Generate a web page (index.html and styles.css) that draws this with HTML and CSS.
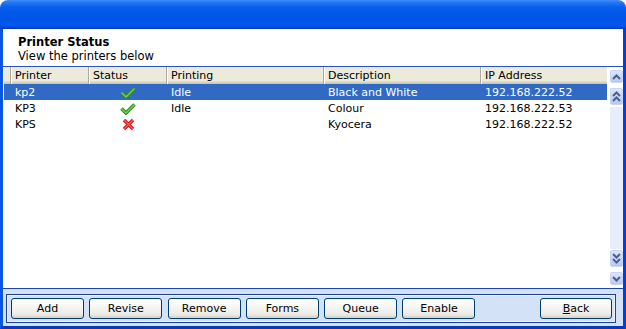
FILE: index.html
```html
<!DOCTYPE html>
<html>
<head>
<meta charset="utf-8">
<link rel="stylesheet" href="styles.css">
</head>
<body>
<div class="window">
  <div class="titlebar"></div>
  <div class="frame">
    <div class="heading">
      <div class="title">Printer Status</div>
      <div class="subtitle">View the printers below</div>
    </div>
    <div class="list">
      <div class="table">
        <div class="row header">
          <div class="cell"></div>
          <div class="cell">Printer</div>
          <div class="cell">Status</div>
          <div class="cell">Printing</div>
          <div class="cell">Description</div>
          <div class="cell">IP Address</div>
        </div>
        <div class="row selected">
          <div class="cell"></div>
          <div class="cell">kp2</div>
          <div class="cell icon">
            <svg width="16" height="12" viewBox="0 0 16 12"><polyline points="1.5,5.5 6,10 14.5,1.5" fill="none" stroke="#2f8a22" stroke-width="3.6"/><polyline points="1.5,5.5 6,10 14.5,1.5" fill="none" stroke="#7ccf5c" stroke-width="1.4"/></svg>
          </div>
          <div class="cell">Idle</div>
          <div class="cell">Black and White</div>
          <div class="cell">192.168.222.52</div>
        </div>
        <div class="row">
          <div class="cell"></div>
          <div class="cell">KP3</div>
          <div class="cell icon">
            <svg width="16" height="12" viewBox="0 0 16 12"><polyline points="1.5,5.5 6,10 14.5,1.5" fill="none" stroke="#2f8a22" stroke-width="3.6"/><polyline points="1.5,5.5 6,10 14.5,1.5" fill="none" stroke="#7ccf5c" stroke-width="1.4"/></svg>
          </div>
          <div class="cell">Idle</div>
          <div class="cell">Colour</div>
          <div class="cell">192.168.222.53</div>
        </div>
        <div class="row">
          <div class="cell"></div>
          <div class="cell">KPS</div>
          <div class="cell icon">
            <svg width="13" height="13" viewBox="0 0 13 13"><path d="M2,2 L11,11 M11,2 L2,11" fill="none" stroke="#d3141b" stroke-width="3.4"/><path d="M2,2 L11,11 M11,2 L2,11" fill="none" stroke="#ff5a5a" stroke-width="1.2"/></svg>
          </div>
          <div class="cell"></div>
          <div class="cell">Kyocera</div>
          <div class="cell">192.168.222.52</div>
        </div>
      </div>
      <div class="scrollbar">
        <div class="sbtn single"><svg width="9" height="6" viewBox="0 0 9 6"><polyline points="1,5 4.5,1.5 8,5" fill="none" stroke="#4d6185" stroke-width="2"/></svg></div>
        <div class="sbtn double"><svg width="9" height="11" viewBox="0 0 9 11"><polyline points="1,5 4.5,1.5 8,5" fill="none" stroke="#4d6185" stroke-width="2"/><polyline points="1,10 4.5,6.5 8,10" fill="none" stroke="#4d6185" stroke-width="2"/></svg></div>
        <div class="track"></div>
        <div class="sbtn double"><svg width="9" height="11" viewBox="0 0 9 11"><polyline points="1,1 4.5,4.5 8,1" fill="none" stroke="#4d6185" stroke-width="2"/><polyline points="1,6 4.5,9.5 8,6" fill="none" stroke="#4d6185" stroke-width="2"/></svg></div>
        <div class="sbtn single down"><svg width="9" height="6" viewBox="0 0 9 6"><polyline points="1,1 4.5,4.5 8,1" fill="none" stroke="#4d6185" stroke-width="2"/></svg></div>
      </div>
    </div>
    <div class="footer">
      <div class="toolbar">
        <button class="btn">Add</button>
        <button class="btn">Revise</button>
        <button class="btn">Remove</button>
        <button class="btn">Forms</button>
        <button class="btn">Queue</button>
        <button class="btn">Enable</button>
        <button class="btn back"><u>B</u>ack</button>
      </div>
    </div>
  </div>
</div>
</body>
</html>
```

FILE: styles.css
```css
* { box-sizing: border-box; }
html, body { margin: 0; padding: 0; background: #ffffff; }
body { font-family: "DejaVu Sans", Verdana, sans-serif; font-size: 11px; color: #000; }

.window { width: 626px; height: 329px; display: flex; flex-direction: column; }

.titlebar {
  height: 29px;
  border-radius: 8px 8px 0 0;
  background: linear-gradient(to bottom,
    #3d8cf8 0px, #2a7cf6 2px, #1c6ff2 4px, #0a5fec 7px, #0058ea 12px,
    #0055e6 20px, #005bee 24px, #0050e0 27px, #003fc6 28px, #0034b8 29px);
}

.frame {
  flex: 1;
  display: flex;
  flex-direction: column;
  border-left: 3px solid #0a56e4;
  border-right: 3px solid #0a3fc8;
  border-bottom: 3px solid #0a3ab8;
  background: #ffffff;
}

.heading { height: 37px; padding: 6px 0 0 15px; line-height: 14px; }
.title { font-weight: bold; font-size: 11.5px; }
.subtitle { font-size: 11.5px; }

.list {
  height: 222px;
  display: flex;
  border-top: 1px solid #2a52be;
}

.table { width: 603px; margin-left: 1px; }

.row {
  display: grid;
  grid-template-columns: 7px 78px 78px 157px 157px 126px;
  height: 16px;
  line-height: 16px;
}

.cell { padding-left: 4px; padding-top: 1px; white-space: nowrap; }
.cell.icon { padding: 0; display: flex; align-items: center; justify-content: center; }

.header {
  height: 17px;
  background: #ebeadb;
  box-shadow: inset 0 -1px #cbc7b8, inset 0 -2px #d6d2c2, inset 0 -3px #e2decd;
}
.header .cell {
  border-left: 1px solid #ffffff;
  border-right: 1px solid #aca899;
  padding-left: 3px;
  padding-top: 2px;
  line-height: 14px;
  overflow: hidden;
}
.header .cell:first-child { border-left: 0; }
.header .cell:last-child { border-right: 0; }

.selected { background: #316ac5; color: #ffffff; }

.scrollbar {
  width: 13px;
  margin-left: 3px;
  display: flex;
  flex-direction: column;
  padding: 3px 0;
}
.sbtn {
  display: flex;
  align-items: center;
  justify-content: center;
  border-radius: 2px;
  background: linear-gradient(to bottom, #dce6fd, #c4d4fb 60%, #b6c9f6);
  border: 1px solid #c6d4f6;
}
.sbtn.single { height: 13px; }
.sbtn.double { height: 17px; }
.scrollbar .single:first-child { margin-bottom: 5px; }
.scrollbar .double:nth-child(2) { margin-bottom: 2px; }
.track { flex: 1; background: #e6eefc; margin-bottom: 1px; }
.sbtn.down { margin-top: 5px; }

.footer {
  flex: 1;
  background: #d4e2f8;
  border-top: 1px solid #1e44a8;
  padding: 5px 7px 3px 3px;
}
.toolbar {
  height: 29px;
  border: 1px solid #1e3f96;
  box-shadow: inset 0 0 0 1px #eef4fd;
  padding: 3px 3px 0 4px;
  display: flex;
  gap: 5.3px;
}
.btn {
  width: 73px;
  height: 21px;
  font-family: "DejaVu Sans", Verdana, sans-serif;
  font-size: 11px;
  color: #000;
  border: 1px solid #003c74;
  border-radius: 3px;
  background: linear-gradient(to bottom, #ffffff 0%, #f6f6f3 40%, #ecebe6 80%, #d6d0c5 100%);
  padding: 0;
  line-height: 19px;
}
.btn.back { margin-left: auto; width: 72px; }
.btn u { text-decoration: underline; }
```
